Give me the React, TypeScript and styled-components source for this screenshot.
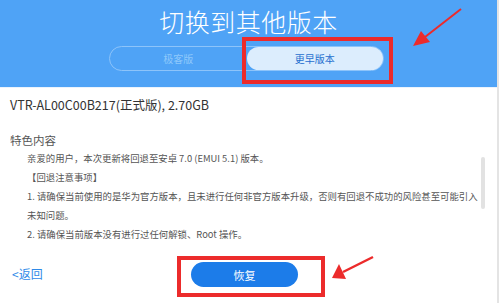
import React from "react";
import styled, { createGlobalStyle } from "styled-components";

const GlobalStyle = createGlobalStyle`
  html, body {
    margin: 0;
    padding: 0;
    background: #fff;
  }
  body {
    font-family: "Noto Sans CJK SC", "Noto Sans", sans-serif;
  }
`;

const Page = styled.div`
  position: relative;
  width: 499px;
  height: 303px;
  overflow: hidden;
  background: #fff;
  border-right: 2px solid #e4e4e4;
  box-sizing: border-box;
  display: flex;
  flex-direction: column;
`;

const Header = styled.header`
  height: 88px;
  flex: none;
  background: #4fa3f6;
  display: flex;
  flex-direction: column;
  align-items: center;
  box-sizing: border-box;
  padding-top: 3px;
  border-bottom: 1px solid #eaf3fd;
`;

const Title = styled.h1`
  margin: 0;
  font-size: 25px;
  font-weight: 300;
  color: #fff;
  line-height: 36px;
  letter-spacing: 0.5px;
`;

const Tabs = styled.div`
  margin-top: 7px;
  width: 275px;
  height: 25px;
  border: 1px solid #8dc4fa;
  border-radius: 13px;
  display: flex;
  box-sizing: border-box;
  margin-left: -4px;
`;

const Tab = styled.div<{ active?: boolean }>`
  flex: 1;
  display: flex;
  align-items: center;
  justify-content: center;
  font-size: 10px;
  border-radius: 12px;
  color: ${(p) => (p.active ? "#1f6fcf" : "#8ec8fb")};
  background: ${(p) => (p.active ? "#dcedfd" : "transparent")};
`;

const Body = styled.main`
  flex: none;
  padding: 0 0 0 10px;
  display: flex;
  flex-direction: column;
`;

const Version = styled.div`
  margin-top: 8px;
  font-size: 12.5px;
  color: #333;
  line-height: 17px;
`;

const SectionTitle = styled.div`
  margin-top: 19px;
  font-size: 11.5px;
  color: #555;
  line-height: 16px;
`;

const Notes = styled.div`
  position: relative;
  height: 98px;
  overflow: hidden;
  padding-left: 17px;
  margin-top: 1px;
`;

const Line = styled.div`
  font-size: 9.4px;
  color: #555;
  line-height: 19px;
  white-space: nowrap;
`;

const Thumb = styled.div`
  position: absolute;
  right: 12px;
  top: 8px;
  width: 4px;
  height: 52px;
  border-radius: 2px;
  background: #e2e2e2;
`;

const Footer = styled.footer`
  flex: 1;
  position: relative;
  display: flex;
  align-items: flex-start;
  justify-content: center;
  padding-top: 15px;
`;

const Back = styled.a`
  position: absolute;
  left: 12px;
  top: 18px;
  font-size: 12px;
  line-height: 17px;
  color: #2f8ae8;
  text-decoration: none;
`;

const Restore = styled.button`
  flex: none;
  width: 107px;
  height: 25px;
  padding: 0;
  border: 0;
  border-radius: 13px;
  background: #1c7ce9;
  color: #fff;
  font-family: inherit;
  font-size: 11px;
  margin-left: -8px;
`;

const Mark = styled.div<{ x: number; y: number; w: number; h: number }>`
  position: absolute;
  left: ${(p) => p.x}px;
  top: ${(p) => p.y}px;
  width: ${(p) => p.w}px;
  height: ${(p) => p.h}px;
  border: 4px solid #ec2b2b;
  box-sizing: border-box;
  pointer-events: none;
`;

const Arrows = styled.svg`
  position: absolute;
  left: 0;
  top: 0;
  width: 499px;
  height: 303px;
  pointer-events: none;
`;

const notes = [
  "亲爱的用户，本次更新将回退至安卓 7.0 (EMUI 5.1) 版本。",
  "【回退注意事项】",
  "1. 请确保当前使用的是华为官方版本，且未进行任何非官方版本升级，否则有回退不成功的风险甚至可能引入",
  "未知问题。",
  "2. 请确保当前版本没有进行过任何解锁、Root 操作。",
  "3. 请确保您的数据已经备份，降级将清除您的全部个人数据。",
];

const App = () => {
  return (
    <Page>
      <GlobalStyle />
      <Header>
        <Title>切换到其他版本</Title>
        <Tabs>
          <Tab>极客版</Tab>
          <Tab active>更早版本</Tab>
        </Tabs>
      </Header>
      <Body>
        <Version>VTR-AL00C00B217(正式版), 2.70GB</Version>
        <SectionTitle>特色内容</SectionTitle>
        <Notes>
          {notes.map((n, i) => (
            <Line key={i}>{n}</Line>
          ))}
          <Thumb />
        </Notes>
      </Body>
      <Footer>
        <Back href="#">&lt;返回</Back>
        <Restore>恢复</Restore>
      </Footer>
      <Mark x={242} y={37} w={151} h={47} />
      <Mark x={177} y={256} w={148} h={41} />
      <Arrows viewBox="0 0 499 303">
        <line x1="461" y1="9" x2="425" y2="37" stroke="#ec2b2b" strokeWidth="2" />
        <polygon points="413,46 421,31 430,42" fill="#ec2b2b" />
        <line x1="373" y1="257" x2="343" y2="272" stroke="#ec2b2b" strokeWidth="2.5" />
        <polygon points="332,278 339,264 346,279" fill="#ec2b2b" />
      </Arrows>
    </Page>
  );
};

export default App;
